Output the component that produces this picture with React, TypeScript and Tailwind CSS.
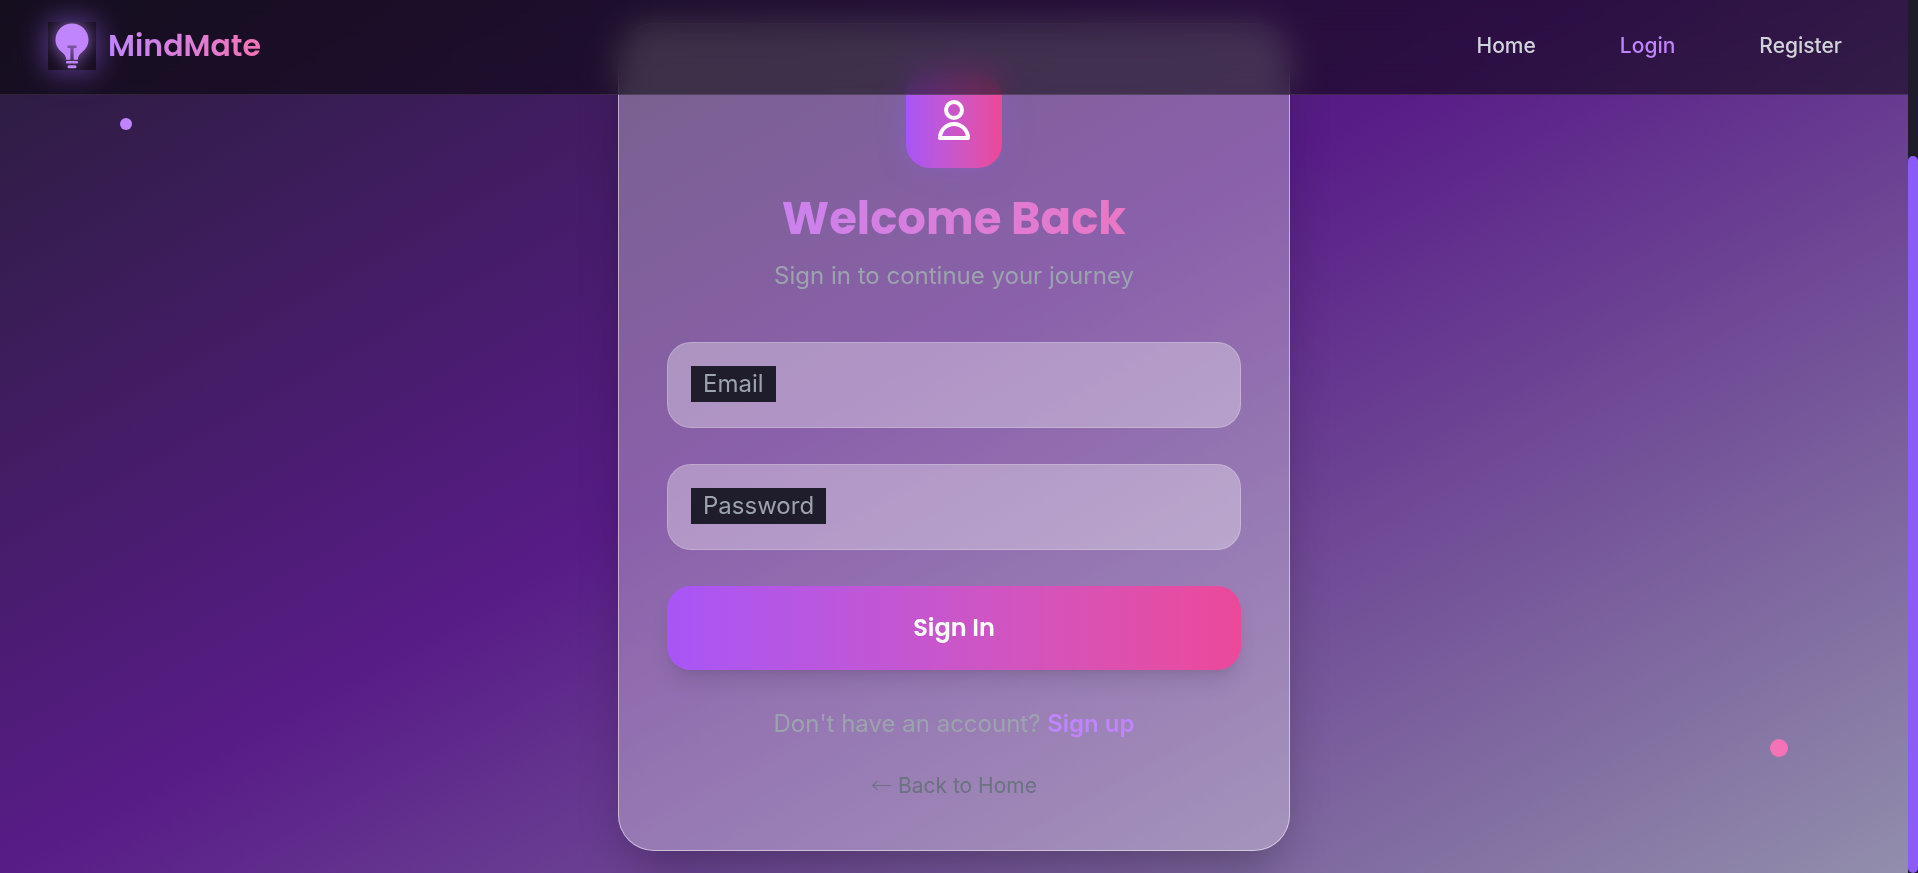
import { useEffect, useLayoutEffect, useRef, useState } from "react";

const INITIAL_SCROLL = 190;

function BulbIcon() {
  return (
    <svg
      viewBox="0 0 48 48"
      className="size-12 drop-shadow-[0_0_8px_rgba(192,132,252,0.8)]"
      aria-hidden="true"
    >
      <path
        fill="#c084fc"
        d="M24 1.500C14.800 1.500 7.500 8.800 7.500 17.800c0 5.500 2.800 9.700 6.800 12.700 2.300 1.800 3.700 3.600 3.900 7.200h4.200V26h-1.900a1.200 1.200 0 0 1 0-2.400h7a1.200 1.200 0 0 1 0 2.400h-1.900v11.700h4.200c.2-3.600 1.600-5.400 3.900-7.200 4-3 6.800-7.200 6.800-12.700C40.500 8.800 33.200 1.500 24 1.500Z"
      />
      <rect x="18" y="39" width="12" height="2.600" rx="1.200" fill="#c084fc" />
      <rect x="19.500" y="43.200" width="9" height="3" rx="1.500" fill="#c084fc" />
    </svg>
  );
}

function Field({ id, label, type }: { id: string; label: string; type: string }) {
  return (
    <div className="relative">
      <input
        id={id}
        type={type}
        className="block h-[86px] w-full rounded-3xl border border-white/20 bg-white/33 px-6 pt-6 text-2xl text-white outline-none focus:border-[#c084fc]"
      />
      <label
        htmlFor={id}
        className="absolute top-6 left-6 bg-[#1f1d2b] px-3 text-2xl leading-9 text-[#9ca3af]"
      >
        {label}
      </label>
    </div>
  );
}

export default function App() {
  const scroller = useRef<HTMLDivElement>(null);
  const [thumb, setThumb] = useState({ top: 0, height: 100 });

  const update = () => {
    const el = scroller.current;
    if (!el) return;
    setThumb({
      top: (el.scrollTop / el.scrollHeight) * 100,
      height: (el.clientHeight / el.scrollHeight) * 100,
    });
  };

  useLayoutEffect(() => {
    if (scroller.current) scroller.current.scrollTop = INITIAL_SCROLL;
    update();
  }, []);

  useEffect(() => {
    window.addEventListener("resize", update);
    return () => window.removeEventListener("resize", update);
  }, []);

  return (
    <div className="flex h-screen overflow-hidden bg-[#1f1d2b] font-['Inter',sans-serif] text-2xl">
      <div className="relative isolate min-w-0 flex-1">
        <div ref={scroller} onScroll={update} className="isolate h-full overflow-y-auto will-change-transform [scrollbar-width:none]">
          <div className="relative overflow-hidden bg-[linear-gradient(to_bottom_right,#1f1d2b,#581c87,#928eac)] pt-[190px]">
            <span className="absolute top-[308px] left-[120px] size-3 rounded-full bg-[#c084fc]" />
            <span className="absolute right-[120px] bottom-[116px] size-[18px] rounded-full bg-[#f472b6]" />
            <main className="flex min-h-screen items-center justify-center">
              <section className="w-full max-w-2xl rounded-[36px] border border-white/50 bg-white/30 p-12 text-center shadow-[0_25px_50px_-12px_rgba(0,0,0,0.3)]">
                <div className="mx-auto flex size-24 items-center justify-center rounded-3xl bg-linear-to-r from-[#a855f7] to-[#ec4899] shadow-[0_0_30px_rgba(139,92,246,0.3)]">
                  <svg viewBox="0 0 48 48" className="size-12" fill="none" stroke="#fff" strokeWidth="4" strokeLinejoin="round" aria-hidden="true">
                    <circle cx="24" cy="14" r="8" />
                    <path d="M10 42a14 14 0 0 1 28 0Z" />
                  </svg>
                </div>
                <h1 className="mt-6 bg-linear-to-r from-[#c084fc] to-[#f472b6] bg-clip-text font-['Poppins','Inter',sans-serif] text-[45px] leading-[54px] font-bold text-transparent">
                  Welcome Back
                </h1>
                <p className="mt-3 leading-9 text-[#9ca3af]">Sign in to continue your journey</p>
                <form className="mt-12 flex flex-col gap-9" onSubmit={(e) => e.preventDefault()}>
                  <Field id="email" label="Email" type="email" />
                  <Field id="password" label="Password" type="password" />
                  <button
                    type="submit"
                    className="h-[84px] rounded-3xl bg-linear-to-r from-[#a855f7] to-[#ec4899] font-['Poppins','Inter',sans-serif] font-semibold text-white shadow-[0_15px_22px_-4px_rgba(0,0,0,0.1),0_6px_9px_-6px_rgba(0,0,0,0.1)]"
                  >
                    Sign In
                  </button>
                </form>
                <p className="mt-9 leading-9 text-[#9ca3af]">
                  Don't have an account?{" "}
                  <a href="#signup" className="font-semibold text-[#c084fc]">
                    Sign up
                  </a>
                </p>
                <a href="#home" className="mx-auto mt-7 block w-fit text-[21px] leading-8 text-[#6b7280]">
                  <span className="font-['Noto_Sans_CJK_JP',sans-serif] leading-none font-light">←</span> Back to Home
                </a>
              </section>
            </main>
          </div>
        </div>

        <header className="absolute inset-x-0 top-0 z-10 flex items-center justify-between border-b border-white/10 bg-black/50 px-12 pt-[22px] pb-6 backdrop-blur-[16px]">
          <a href="#top" className="flex items-center gap-3">
            <span className="overflow-hidden shadow-[0_0_30px_rgba(155,105,250,0.6)]">
              <BulbIcon />
            </span>
            <span className="bg-linear-to-r from-[#c084fc] to-[#f472b6] bg-clip-text font-['Poppins','Inter',sans-serif] text-[30px] leading-9 font-semibold text-transparent">
              MindMate
            </span>
          </a>
          <nav className="flex gap-12 text-[21px] leading-[30px] font-medium text-[#d1d5db]">
            <a href="#home" className="px-[18px]">Home</a>
            <a href="#login" className="px-[18px] text-[#c084fc]">Login</a>
            <a href="#register" className="px-[18px]">Register</a>
          </nav>
        </header>
      </div>

      <div className="relative w-[10px] shrink-0 bg-[#1f1d2b]" aria-hidden="true">
        <div
          className="absolute inset-x-0 rounded-full bg-[#8b5cf6]"
          style={{ top: `${thumb.top}%`, height: `${thumb.height}%` }}
        />
      </div>
    </div>
  );
}
